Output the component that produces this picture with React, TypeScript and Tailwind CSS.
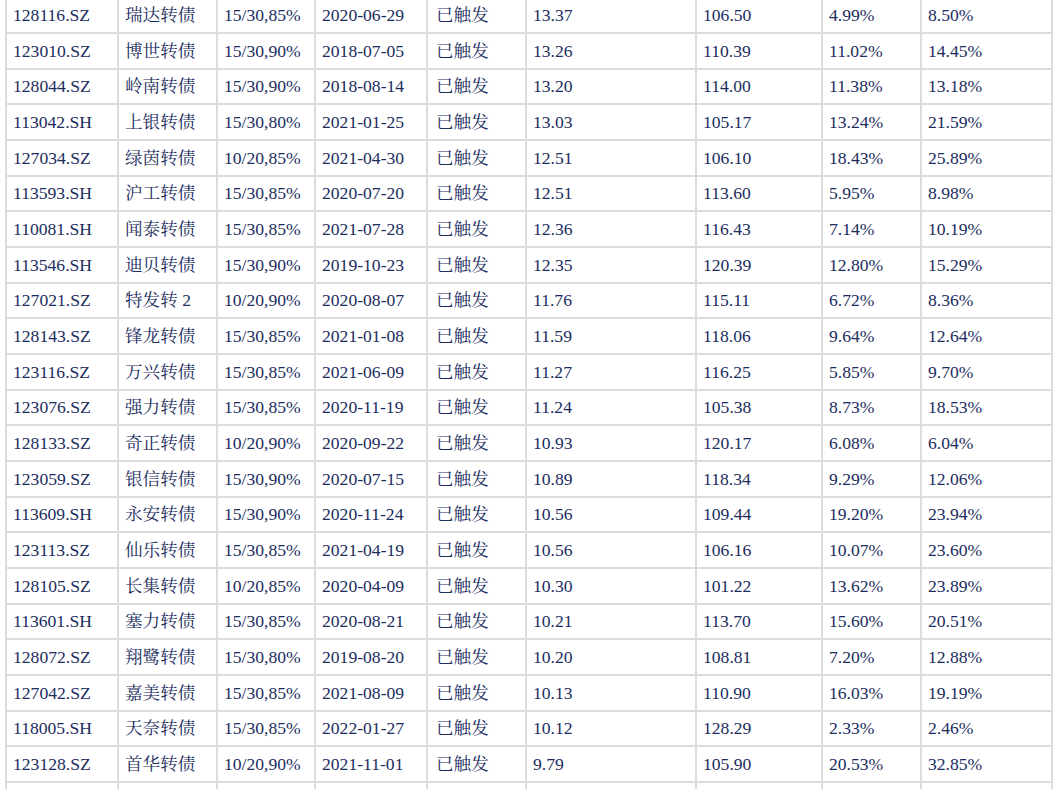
import React from 'react';

const rows: string[][] = [
  ['128116.SZ', '瑞达转债', '15/30,85%', '2020-06-29', '已触发', '13.37', '106.50', '4.99%', '8.50%'],
  ['123010.SZ', '博世转债', '15/30,90%', '2018-07-05', '已触发', '13.26', '110.39', '11.02%', '14.45%'],
  ['128044.SZ', '岭南转债', '15/30,90%', '2018-08-14', '已触发', '13.20', '114.00', '11.38%', '13.18%'],
  ['113042.SH', '上银转债', '15/30,80%', '2021-01-25', '已触发', '13.03', '105.17', '13.24%', '21.59%'],
  ['127034.SZ', '绿茵转债', '10/20,85%', '2021-04-30', '已触发', '12.51', '106.10', '18.43%', '25.89%'],
  ['113593.SH', '沪工转债', '15/30,85%', '2020-07-20', '已触发', '12.51', '113.60', '5.95%', '8.98%'],
  ['110081.SH', '闻泰转债', '15/30,85%', '2021-07-28', '已触发', '12.36', '116.43', '7.14%', '10.19%'],
  ['113546.SH', '迪贝转债', '15/30,90%', '2019-10-23', '已触发', '12.35', '120.39', '12.80%', '15.29%'],
  ['127021.SZ', '特发转 2', '10/20,90%', '2020-08-07', '已触发', '11.76', '115.11', '6.72%', '8.36%'],
  ['128143.SZ', '锋龙转债', '15/30,85%', '2021-01-08', '已触发', '11.59', '118.06', '9.64%', '12.64%'],
  ['123116.SZ', '万兴转债', '15/30,85%', '2021-06-09', '已触发', '11.27', '116.25', '5.85%', '9.70%'],
  ['123076.SZ', '强力转债', '15/30,85%', '2020-11-19', '已触发', '11.24', '105.38', '8.73%', '18.53%'],
  ['128133.SZ', '奇正转债', '10/20,90%', '2020-09-22', '已触发', '10.93', '120.17', '6.08%', '6.04%'],
  ['123059.SZ', '银信转债', '15/30,90%', '2020-07-15', '已触发', '10.89', '118.34', '9.29%', '12.06%'],
  ['113609.SH', '永安转债', '15/30,90%', '2020-11-24', '已触发', '10.56', '109.44', '19.20%', '23.94%'],
  ['123113.SZ', '仙乐转债', '15/30,85%', '2021-04-19', '已触发', '10.56', '106.16', '10.07%', '23.60%'],
  ['128105.SZ', '长集转债', '10/20,85%', '2020-04-09', '已触发', '10.30', '101.22', '13.62%', '23.89%'],
  ['113601.SH', '塞力转债', '15/30,85%', '2020-08-21', '已触发', '10.21', '113.70', '15.60%', '20.51%'],
  ['128072.SZ', '翔鹭转债', '15/30,80%', '2019-08-20', '已触发', '10.20', '108.81', '7.20%', '12.88%'],
  ['127042.SZ', '嘉美转债', '15/30,85%', '2021-08-09', '已触发', '10.13', '110.90', '16.03%', '19.19%'],
  ['118005.SH', '天奈转债', '15/30,85%', '2022-01-27', '已触发', '10.12', '128.29', '2.33%', '2.46%'],
  ['123128.SZ', '首华转债', '10/20,90%', '2021-11-01', '已触发', '9.79', '105.90', '20.53%', '32.85%'],
  // next row is only just visible at the bottom edge, its text lies below the fold
  ['', '', '', '', '', '', '', '', ''],
];

const widths = [
  'w-[112px]', 'w-[99px]', 'w-[98px]', 'w-[112px]', 'w-[99px]',
  'w-[170px]', 'w-[126px]', 'w-[99px]', 'w-[131px]',
];

const App: React.FC = () => {
  return (
    <div className="h-[789px] w-[1058px] overflow-hidden bg-white">
      <div
        className="ml-[5px] mt-[-1.68px] w-[1048px] border-l-2 border-[#dcdcdc] text-[17.6px] text-[#1b2d5e]"
        style={{ fontFamily: '"Liberation Serif", "Noto Serif CJK SC", "Noto Sans CJK SC", serif' }}
      >
        {rows.map((row, i) => (
          <div key={i} className="flex h-[35.68px] border-b-2 border-[#dcdcdc]">
            {row.map((cell, j) => (
              <div
                key={j}
                className={`${widths[j]} flex shrink-0 items-center border-r-2 border-[#dcdcdc] whitespace-nowrap ${j === 4 ? 'pl-[8px]' : 'pl-[6px]'}`}
              >
                {cell}
              </div>
            ))}
          </div>
        ))}
      </div>
    </div>
  );
};

export default App;
